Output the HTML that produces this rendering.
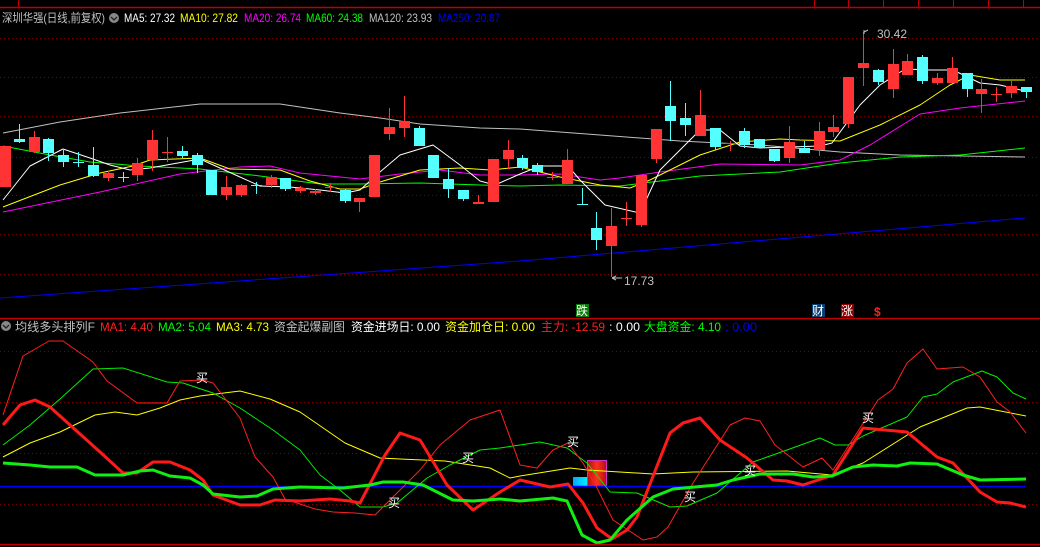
<!DOCTYPE html>
<html><head><meta charset="utf-8"><style>
html,body{margin:0;padding:0;background:#000;width:1040px;height:547px;overflow:hidden}
svg{display:block}
text{font-family:"Liberation Sans","Noto Sans CJK SC",sans-serif;font-size:12px}
</style></head><body>
<svg id="s" width="1040" height="547" xmlns="http://www.w3.org/2000/svg">
<defs><linearGradient id="rg" x1="0" x2="1"><stop offset="0" stop-color="#b01010"/><stop offset=".5" stop-color="#ff3020"/><stop offset="1" stop-color="#b01010"/></linearGradient>
<linearGradient id="cg" x1="0" x2="1"><stop offset="0" stop-color="#00a8ff"/><stop offset="1" stop-color="#00f0ff"/></linearGradient></defs>
<rect width="1040" height="547" fill="#000"/>
<line x1="0" y1="7.5" x2="1040" y2="7.5" stroke="#c00000" stroke-width="1.5"/>
<line x1="18.5" y1="0" x2="18.5" y2="7" stroke="#c00000"/>
<g stroke="#c00000"><line x1="814.5" y1="0" x2="814.5" y2="7"/><line x1="848.5" y1="0" x2="848.5" y2="7"/><line x1="883.5" y1="0" x2="883.5" y2="7"/><line x1="918.5" y1="0" x2="918.5" y2="7"/><line x1="953.5" y1="0" x2="953.5" y2="7"/><line x1="988.5" y1="0" x2="988.5" y2="7"/><line x1="1023.5" y1="0" x2="1023.5" y2="7"/></g>
<g id="grid" stroke="#800000" stroke-dasharray="1,3"></g>
<text x="2" y="22" fill="#c0c0c0" textLength="103" lengthAdjust="spacingAndGlyphs">深圳华强(日线,前复权)</text>
<circle cx="114" cy="18" r="5" fill="#888"/>
<path d="M111 17l3 3 3-3" stroke="#222" fill="none" stroke-width="1.3"/>
<text x="124" y="22" fill="#fff" textLength="51" lengthAdjust="spacingAndGlyphs">MA5: 27.32</text>
<text x="180" y="22" fill="#ffff00" textLength="58" lengthAdjust="spacingAndGlyphs">MA10: 27.82</text>
<text x="244" y="22" fill="#ff00ff" textLength="57" lengthAdjust="spacingAndGlyphs">MA20: 26.74</text>
<text x="306" y="22" fill="#00ff00" textLength="57" lengthAdjust="spacingAndGlyphs">MA60: 24.38</text>
<text x="369" y="22" fill="#c0c0c0" textLength="63" lengthAdjust="spacingAndGlyphs">MA120: 23.93</text>
<text x="438" y="22" fill="#0000ff" textLength="62" lengthAdjust="spacingAndGlyphs">MA250: 20.87</text>
<g id="ma"></g>
<g id="candles"></g>
<path d="M864 30v4M864 32l4-2" stroke="#bbb" fill="none"/>
<text x="877" y="38" fill="#c0c0c0">30.42</text>
<path d="M612 278h10M612 278l4-2M612 278l4 2" stroke="#bbb" fill="none"/>
<text x="624" y="285" fill="#c0c0c0">17.73</text>
<rect x="576" y="304" width="13" height="13" fill="#0a7a0a"/><text x="576" y="315" fill="#fff" font-size="11">跌</text>
<rect x="812" y="304" width="13" height="13" fill="#0b3d6e"/><text x="812" y="315" fill="#fff" font-size="11">财</text>
<rect x="841" y="304" width="13" height="13" fill="#8b0000"/><text x="841" y="315" fill="#fff" font-size="11">涨</text>
<text x="874" y="316" fill="#ff2020" font-size="11" font-weight="bold">$</text>
<line x1="0" y1="318.5" x2="1040" y2="318.5" stroke="#c00000" stroke-width="1.5"/>
<circle cx="6" cy="326" r="5" fill="#888"/>
<path d="M3 325l3 3 3-3" stroke="#222" fill="none" stroke-width="1.3"/>
<text x="15" y="331" fill="#c0c0c0" textLength="80" lengthAdjust="spacingAndGlyphs">均线多头排列F</text>
<text x="100" y="331" fill="#ff2020" textLength="53" lengthAdjust="spacingAndGlyphs">MA1: 4.40</text>
<text x="158" y="331" fill="#00ff00" textLength="53" lengthAdjust="spacingAndGlyphs">MA2: 5.04</text>
<text x="216" y="331" fill="#ffff00" textLength="53" lengthAdjust="spacingAndGlyphs">MA3: 4.73</text>
<text x="274" y="331" fill="#c0c0c0" textLength="71" lengthAdjust="spacingAndGlyphs">资金起爆副图</text>
<text x="351" y="331" fill="#fff" textLength="89" lengthAdjust="spacingAndGlyphs">资金进场日: 0.00</text>
<text x="445" y="331" fill="#ffff00" textLength="90" lengthAdjust="spacingAndGlyphs">资金加仓日: 0.00</text>
<text x="541" y="331" fill="#ff2020" textLength="64" lengthAdjust="spacingAndGlyphs">主力: -12.59</text>
<text x="609" y="331" fill="#fff" textLength="31" lengthAdjust="spacingAndGlyphs">: 0.00</text>
<text x="644" y="331" fill="#00ff00" textLength="77" lengthAdjust="spacingAndGlyphs">大盘资金: 4.10</text>
<text x="725" y="331" fill="#0000ff" textLength="32" lengthAdjust="spacingAndGlyphs">: 0.00</text>
<g id="sub"></g>
<line x1="0" y1="544.5" x2="1040" y2="544.5" stroke="#c00000" stroke-width="1.5"/>
</svg>
<script>
var NS="http://www.w3.org/2000/svg";
function el(p,t,a){var e=document.createElementNS(NS,t);for(var k in a)e.setAttribute(k,a[k]);document.getElementById(p).appendChild(e);return e;}
[38,77,116,157,195,234,274,351,402,453,504].forEach(function(y){el("grid","line",{x1:0,x2:1040,y1:y+.5,y2:y+.5});});
function pl(p,pts,c,w){el(p,"polyline",{points:pts,fill:"none",stroke:c,"stroke-width":w||1,"stroke-linejoin":"round"});}
pl("ma","0,298 520,261 1025,218","#0000ff");
pl("ma","3,133 60,122 120,113 200,104 280,104 340,113 380,118 420,124 480,128 520,129 600,135 680,141 760,145 840,152 900,155 1025,157","#c0c0c0");
pl("ma","3,146 50,155 90,162 140,166 200,169 260,176 320,184 360,184 420,183 480,185 520,186 560,185 620,186 700,176 780,172 840,163 900,157 960,155 1025,148","#00ff00");
pl("ma","3,212 100,192 180,174 240,167 270,166 300,173 360,179 400,174 440,170 480,175 520,175 560,174 600,180 620,178 660,172 720,164 800,165 840,160 870,145 920,114 960,108 1025,101","#ff00ff");
pl("ma","3,207 60,185 100,173 133,166 150,160 200,158 230,169 280,170 310,181 340,189 360,189 380,182 420,170 460,168 490,170 520,167 540,172 560,177 600,185 630,188 650,180 700,155 740,142 780,139 800,140 840,141 880,125 920,105 950,85 970,75 1000,80 1025,80","#ffff00");
pl("ma","3,200 30,166 63,149 90,158 110,165 130,170 150,168 200,159 240,177 260,186 290,187 320,190 345,193 360,190 380,172 400,155 433,145 460,165 480,181 495,185 520,174 540,166 568,166 580,180 605,205 640,213 660,170 700,130 720,130 740,146 760,148 790,147 820,146 832,143 860,105 880,85 905,69 930,70 953,70 980,83 1000,85 1025,91","#fff");
var R="#ff3333",C="#54ffff";
var cs=[[0,146,187,146,187,R],[14,139,142,124,143,C],[29,137,152,131,153,R],[43,139,153,138,161,C],[58,155,162,150,167,C],[73,162,163,152,167,C],[88,165,176,147,177,C],[103,173,178,171,181,R],[118,177,178,172,182,C],[132,163,175,158,181,R],[147,140,160,130,171,R],[162,152,153,137,162,R],[177,151,156,146,158,C],[192,155,165,153,173,C],[206,170,195,170,195,C],[221,187,195,176,200,R],[236,185,195,184,197,R],[251,185,186,182,194,C],[266,177,185,175,188,R],[280,178,189,178,191,C],[295,188,191,186,193,R],[310,191,193,189,195,R],[325,187,188,183,192,R],[340,190,201,189,203,C],[354,198,202,198,212,R],[369,155,197,155,197,R],[384,127,134,108,140,R],[399,121,128,96,137,R],[414,128,146,126,146,C],[428,155,178,155,178,C],[443,179,189,168,198,C],[458,190,199,190,201,C],[473,202,204,195,204,R],[488,159,202,159,202,R],[503,150,159,140,169,R],[517,158,168,155,170,C],[532,165,172,163,175,C],[547,177,178,172,180,R],[562,160,184,149,184,R],[577,204,205,188,205,C],[591,228,240,212,250,C],[606,226,246,208,277,R],[621,218,219,202,226,R],[636,175,225,175,227,R],[651,129,159,129,163,R],[665,106,121,81,141,C],[680,118,125,103,136,C],[695,115,136,90,136,R],[710,128,147,128,150,C],[725,143,144,141,151,R],[739,131,145,128,148,C],[754,139,148,139,148,C],[769,149,161,149,162,C],[784,142,158,126,163,R],[799,148,153,141,153,C],[814,131,150,122,156,R],[828,127,132,115,137,R],[843,77,124,77,128,R],[858,63,68,32,86,R],[873,70,82,69,85,C],[888,64,89,49,98,R],[902,61,75,54,75,R],[917,57,81,55,84,C],[932,78,83,73,85,R],[947,68,83,57,83,R],[962,73,89,73,97,C],[976,89,94,79,113,R],[991,94,95,87,102,R],[1006,86,93,80,98,R],[1021,87,92,87,98,C]];
cs.forEach(function(c){var cx=c[0]+5.5;el("candles","line",{x1:cx,x2:cx,y1:c[3],y2:c[4],stroke:c[5]});el("candles","rect",{x:c[0],y:c[1],width:11,height:Math.max(1,c[2]-c[1]),fill:c[5]});});
el("sub","rect",{x:573,y:477,width:15,height:9,fill:"url(#cg)"});
el("sub","rect",{x:587.5,y:460.5,width:19,height:25.5,fill:"url(#rg)",stroke:"#cc33cc"});
el("sub","line",{x1:0,x2:1025,y1:486.5,y2:486.5,stroke:"#0000ff","stroke-width":1.5});
pl("sub","3,457 30,443 60,432 95,415 115,412 137,415 160,408 180,400 200,396 240,391 270,399 300,412 345,443 380,458 400,459 445,461 490,468 510,478 520,476 570,468 587,470 653,474 693,472 787,471 832,475 863,463 920,427 967,408 980,407 1026,416","#ffff00");
pl("sub","3,445 30,425 60,399 93,369 123,368 167,382 183,383 213,393 240,408 273,430 300,450 320,475 340,490 360,507 383,507 397,503 427,478 450,465 480,450 500,448 520,445 540,442 567,448 587,463 610,492 637,493 670,507 687,506 717,493 753,462 787,450 820,438 835,445 848,445 863,436 907,417 923,397 937,394 953,382 982,371 997,377 1013,393 1026,399","#00ee00");
pl("sub","3,415 23,356 49,341 63,341 93,362 107,381 137,403 167,403 180,381 203,380 213,383 240,418 255,457 273,477 285,499 315,509 333,512 355,513 375,515 400,490 420,470 440,445 470,420 500,410 520,465 537,468 553,450 568,443 583,463 597,488 613,520 643,540 657,537 668,527 693,483 730,425 745,418 760,421 775,445 803,467 822,458 833,470 878,400 893,389 907,363 923,349 937,369 963,367 980,377 997,402 1010,412 1026,433","#ff2020");
pl("sub","3,425 20,405 35,400 50,407 70,425 100,452 123,473 137,473 153,462 170,462 190,470 203,480 213,495 240,505 260,505 275,500 300,501 330,499 350,501 360,503 385,455 400,433 420,440 447,485 473,510 500,492 520,480 550,487 568,484 583,503 597,528 612,539 627,530 637,517 670,433 683,423 700,418 720,440 747,458 773,480 787,481 803,485 833,475 863,428 907,432 937,457 953,463 980,492 997,502 1010,503 1026,507","#ff1a1a",3);
pl("sub","3,463 30,465 50,467 77,467 95,475 123,475 140,471 153,470 170,476 190,478 203,485 213,494 240,497 257,496 273,489 300,487 343,488 370,485 383,482 403,482 423,485 453,500 473,501 500,499 520,501 553,498 567,501 582,535 597,543 610,540 627,520 653,497 673,489 717,485 733,480 760,474 793,474 813,477 832,476 853,467 873,465 897,466 910,463 937,464 963,475 980,480 1026,479","#11ee11",3);
[[202,377],[468,457],[394,502],[573,441],[750,470],[690,496],[868,417]].forEach(function(p){var t=el("sub","text",{x:p[0]-6,y:p[1]+5,fill:"#fff","font-size":"12"});t.textContent="买";});
</script>
</body></html>
